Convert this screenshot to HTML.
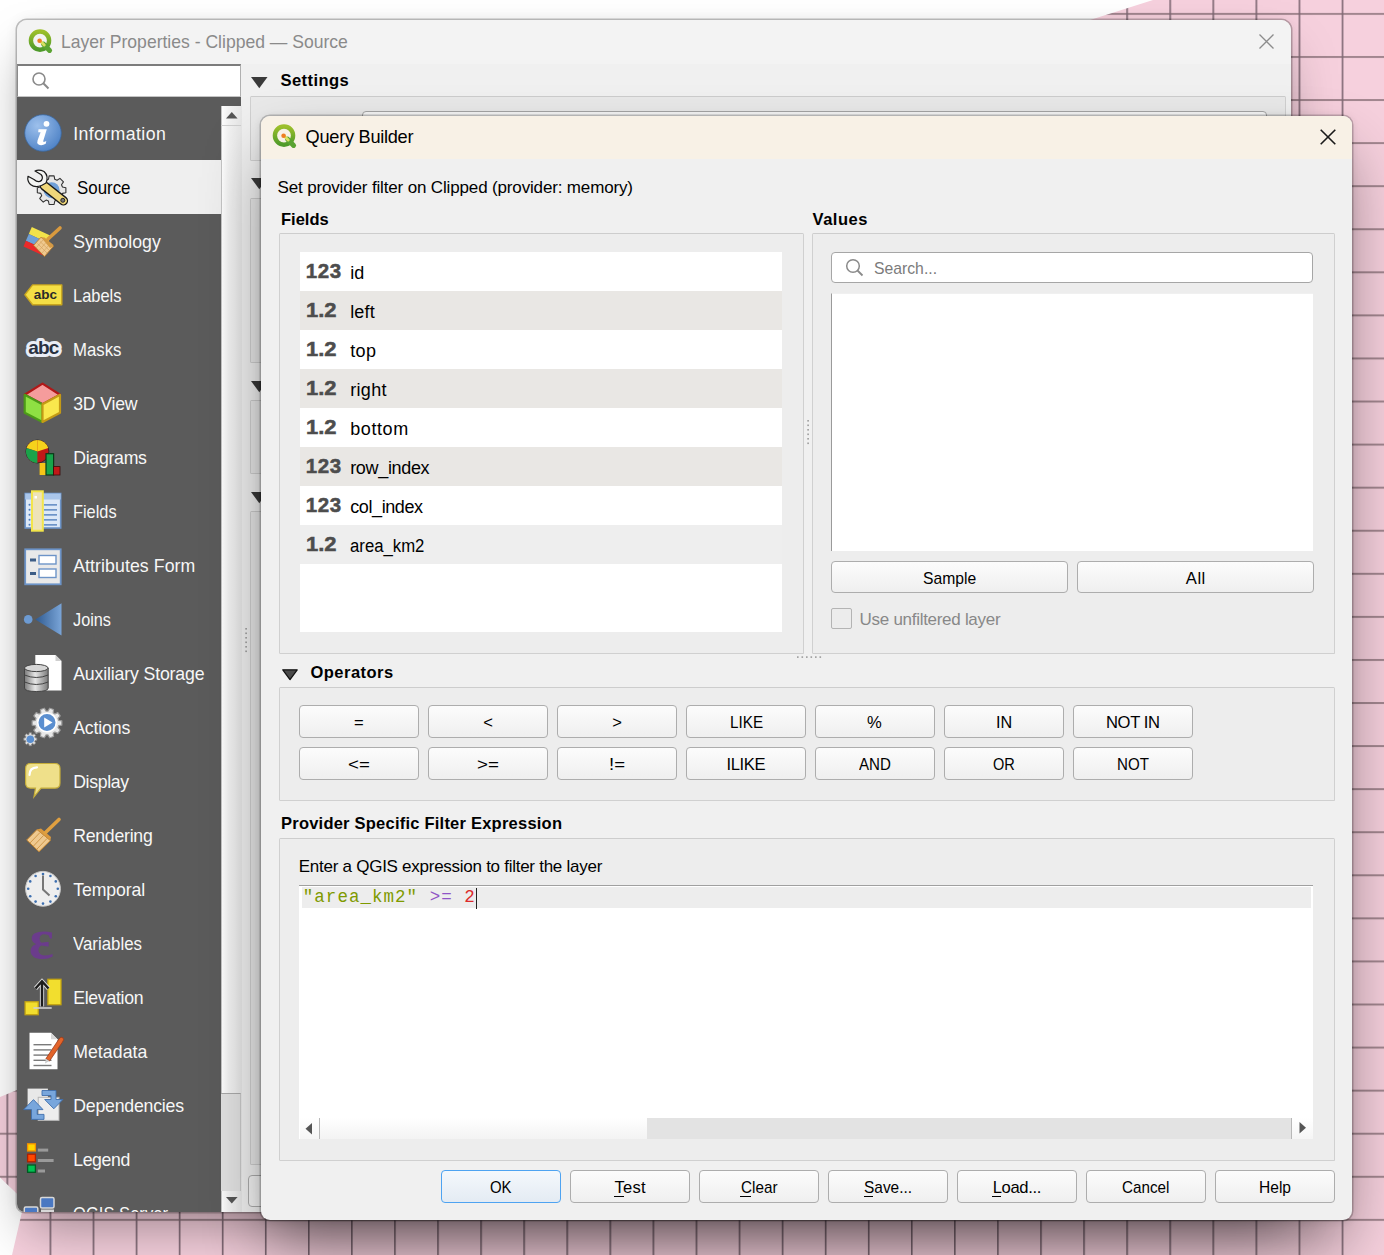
<!DOCTYPE html>
<html><head><meta charset="utf-8">
<style>
*{box-sizing:border-box;margin:0;padding:0}
html,body{width:1384px;height:1255px;overflow:hidden;background:#fff}
body{position:relative;font-family:"Liberation Sans",sans-serif;font-size:17px;color:#000}
.a{position:absolute}
.t{position:absolute;white-space:pre}
svg{position:absolute;overflow:visible}
.gb{position:absolute;background:#ededed;border:1px solid #d0d0d0;border-top:1.5px solid #cdcdcd;border-radius:1.5px}
.btn{position:absolute;height:32px;width:120px;border:1px solid #adadad;border-radius:4px;background:linear-gradient(#fcfcfc,#efefef)}
</style></head><body>
<svg width="1384" height="1255" style="left:0;top:0">
<defs>
<pattern id="grid" patternUnits="userSpaceOnUse" x="6.5" y="12.9" width="43.07" height="43.07">
<rect width="43.07" height="43.07" fill="#f6d0dd"/>
<rect x="0" y="0" width="43.07" height="2" fill="#a2868f"/>
<rect x="0" y="0" width="1.6" height="43.07" fill="#7f6874"/>
</pattern>
</defs>
<rect width="1384" height="1255" fill="url(#grid)"/>
<polygon points="0,0 1153,0 1090,20 600,600 17,1090 0,1097" fill="#ffffff"/>
<polygon points="0,1177.6 24.5,1201 12,1255 0,1255" fill="#ffffff"/>
</svg>
<div class="a" style="left:17px;top:20px;width:1274px;height:1192px;background:#f0f0f0;border-radius:10px 10px 8px 8px;box-shadow:0 0 0 1.5px rgba(0,0,0,.24),0 0 14px rgba(0,0,0,.07),0 26px 50px -10px rgba(0,0,0,.36)"></div>
<div class="a" style="left:17px;top:20px;width:1274px;height:44px;background:#f3f3f3;border-radius:10px 10px 0 0"></div>
<div class="a" style="left:241px;top:64px;width:1050px;height:1148px;background:#f0f0f0;border-radius:0 0 8px 0"></div>
<svg style="left:28px;top:29px" width="24" height="24" viewBox="0 0 24 24">
<defs><linearGradient id="qg28" x1="0" y1="0" x2="0" y2="1"><stop offset="0" stop-color="#9cbf2b"/><stop offset="1" stop-color="#4f9a2a"/></linearGradient></defs>
<circle cx="12" cy="11.6" r="9.1" fill="none" stroke="url(#qg28)" stroke-width="4.4"/>
<path d="M15.6 15.2 L21.6 21.4" stroke="#5aa332" stroke-width="5" stroke-linecap="round"/>
<path d="M13.2 13 L16.2 16" stroke="#d8e060" stroke-width="3" stroke-linecap="round"/>
<circle cx="11.6" cy="11.8" r="2.3" fill="#ef7f22"/>
</svg>
<span class="t" style="left:60.5px;top:32.9px;font-size:18.6px;line-height:18.6px;color:#8a8a8a;transform:scaleX(0.9442);transform-origin:0 0;">Layer Properties - Clipped — Source</span>
<svg style="left:1259px;top:34px" width="15" height="15"><path d="M0.5 0.5 L14.5 14.5 M14.5 0.5 L0.5 14.5" stroke="#8c8c8c" stroke-width="1.3"/></svg>
<div class="a" style="left:17px;top:64px;width:224px;height:33px;background:#fff;border:1px solid #b0b0b0;border-top:2px solid #7c7c7c;border-left:1.5px solid #8a8a8a;border-bottom:1px solid #c4c4c4"></div>
<svg style="left:31px;top:71px" width="20" height="20"><circle cx="8" cy="8" r="6" fill="none" stroke="#8a8a8a" stroke-width="1.6"/><path d="M12.3 12.3 L17.5 17.5" stroke="#8a8a8a" stroke-width="2"/></svg>
<div class="a" style="left:17px;top:97px;width:224px;height:1115px;background:#5b5b5b;border-bottom-left-radius:8px"></div>
<div class="a" style="left:17px;top:160px;width:204px;height:54px;background:#efefef"></div>
<div class="a" style="left:221px;top:106px;width:20.5px;height:1106px;background:linear-gradient(90deg,#ffffff,#f2f2f2 35%,#e6e6e6)"></div>
<div class="a" style="left:221px;top:106px;width:1px;height:1106px;background:#c4c4c4"></div>
<div class="a" style="left:221px;top:125px;width:20px;height:1px;background:#cfcfcf"></div>
<svg style="left:226px;top:112px" width="12" height="7"><path d="M0 6.5 L5.8 0 L11.6 6.5 Z" fill="#555"/></svg>
<div class="a" style="left:221px;top:1093px;width:20px;height:98px;background:#e0e0e0;border-top:1.5px solid #a8a8a8;border-right:1px solid #c8c8c8"></div>
<svg style="left:226px;top:1197px" width="12" height="7"><path d="M0 0 L5.8 6.5 L11.6 0 Z" fill="#555"/></svg>
<svg style="left:251px;top:77px" width="17" height="12"><path d="M0 0 L16.5 0 L8.25 11.3 Z" fill="#3a3a3a"/></svg>
<span class="t" style="left:280.5px;top:73.0px;font-size:16.6px;line-height:16.6px;color:#000;font-weight:bold;letter-spacing:0.402px;">Settings</span>
<div class="gb" style="left:250px;top:96px;width:1036px;height:65px;background:#e9e9e9"></div>
<div class="a" style="left:362px;top:111px;width:905px;height:30px;border:1px solid #a6a6a6;border-radius:4px;background:#f8f8f8"></div>
<svg style="left:251px;top:178px" width="17" height="12"><path d="M0 0 L16.5 0 L8.25 11.3 Z" fill="#3a3a3a"/></svg>
<div class="gb" style="left:250px;top:198px;width:1036px;height:165px;background:#e9e9e9"></div>
<svg style="left:251px;top:381px" width="17" height="12"><path d="M0 0 L16.5 0 L8.25 11.3 Z" fill="#3a3a3a"/></svg>
<div class="gb" style="left:250px;top:400px;width:1036px;height:74px;background:#e9e9e9"></div>
<svg style="left:251px;top:492px" width="17" height="12"><path d="M0 0 L16.5 0 L8.25 11.3 Z" fill="#3a3a3a"/></svg>
<div class="gb" style="left:250px;top:511px;width:1036px;height:654px;background:#e9e9e9"></div>
<div class="a" style="left:248px;top:1175px;width:120px;height:32px;border:1px solid #adadad;border-radius:4px;background:#f4f4f4"></div>
<svg style="left:245px;top:628px" width="3" height="26"><rect x="0.3" y="0.0" width="1.6" height="1.6" fill="#9c9c9c"/><rect x="0.3" y="4.5" width="1.6" height="1.6" fill="#9c9c9c"/><rect x="0.3" y="9.0" width="1.6" height="1.6" fill="#9c9c9c"/><rect x="0.3" y="13.5" width="1.6" height="1.6" fill="#9c9c9c"/><rect x="0.3" y="18.0" width="1.6" height="1.6" fill="#9c9c9c"/><rect x="0.3" y="22.5" width="1.6" height="1.6" fill="#9c9c9c"/></svg>
<div class="a" style="left:17px;top:97px;width:204px;height:1115px;overflow:hidden;border-bottom-left-radius:8px">
<svg style="left:7px;top:17px" width="40" height="40"><defs><radialGradient id="ig0" cx=".35" cy=".3" r=".8"><stop offset="0" stop-color="#9dc0ec"/><stop offset="1" stop-color="#4a7fc4"/></radialGradient></defs>
<circle cx="19" cy="19" r="18.3" fill="url(#ig0)" stroke="#3a679f" stroke-width="0.8"/>
<circle cx="22.5" cy="9.8" r="2.9" fill="#fff"/><path d="M14.5 15.2 L22.8 15.2 L19.3 26.8 Q18.8 28.6 21.2 27.6 L22.3 27.1 L21.7 29.8 Q17.2 32.4 14.2 30.2 Q12.6 29 13.6 26.2 L16.6 18.3 L14.2 18.3 Z" fill="#fff"/></svg>
<span class="t" style="left:56.2px;top:28.7px;font-size:17.7px;line-height:17.7px;color:#f7f7f7;letter-spacing:0.405px;">Information</span>
<svg style="left:7px;top:71px" width="40" height="40"><polygon points="38.45,19.05 41.88,19.71 41.88,24.69 38.45,25.35 37.50,27.64 39.46,30.54 35.94,34.06 33.04,32.10 30.75,33.05 30.09,36.48 25.11,36.48 24.45,33.05 22.16,32.10 19.26,34.06 15.74,30.54 17.70,27.64 16.75,25.35 13.32,24.69 13.32,19.71 16.75,19.05 17.70,16.76 15.74,13.86 19.26,10.34 22.16,12.30 24.45,11.35 25.11,7.92 30.09,7.92 30.75,11.35 33.04,12.30 35.94,10.34 39.46,13.86 37.50,16.76" fill="#e6e6e6" stroke="#333" stroke-width="1.1" stroke-linejoin="round"/><circle cx="27.6" cy="22.2" r="8" fill="#6fa0d8"/>
<path d="M20.5 17.9 L39.4 32.8" stroke="#1a1a1a" stroke-width="9.5" stroke-linecap="round"/><path d="M20.5 17.9 L39.4 32.8" stroke="#efd77a" stroke-width="6.8" stroke-linecap="round"/><circle cx="38.8" cy="32.3" r="2" fill="#777" stroke="#222" stroke-width="1"/>
<path d="M17.5 17.5 L22 15 Q25 8 20 3.5 Q15 1 11 3 L17 6.5 Q19.5 9 17.5 12.5 Q14 15 10 11.5 L4 8.3 Q3 13 6.5 16.5 Q11 20 17.5 17.5 Z" fill="#f4f5f3" stroke="#1a1a1a" stroke-width="1.2" stroke-linejoin="round"/></svg>
<span class="t" style="left:60.0px;top:82.8px;font-size:17.7px;line-height:17.7px;color:#000;transform:scaleX(0.9539);transform-origin:0 0;">Source</span>
<svg style="left:7px;top:125px" width="40" height="40"><polygon points="7.8,5.1 26.2,13.5 24.2,20.9 4.8,12" fill="#f2e24a"/><polygon points="4.8,12 24.2,20.9 22.2,28 1.9,18.7" fill="#6fa0d8"/><polygon points="1.9,18.7 22.2,28 20.5,34.1 -0.5,24.4" fill="#ea2a2a"/>
<polygon points="9.6,23.3 17,15.2 29.3,24.4 20.5,34.5" fill="#efc98f" stroke="#b87a2a" stroke-width="0.9"/><path d="M12 26 L19 18 M15 28.5 L22 20.5 M18 31 L25 23 M13.5 21.5 L23 31 M16 19.5 L25.5 28.5" stroke="#c99550" stroke-width=".6" opacity=".8"/><polygon points="17,15.2 20.5,15.5 29.5,23 29.3,24.4 26,26" fill="#d49a45"/>
<path d="M24 17 L36 6" stroke="#d99a3e" stroke-width="3.6" stroke-linecap="round"/></svg>
<span class="t" style="left:56.2px;top:136.8px;font-size:17.7px;line-height:17.7px;color:#f7f7f7;letter-spacing:0.017px;">Symbology</span>
<svg style="left:7px;top:179px" width="40" height="40"><path d="M0.9 18.8 L8.6 8.9 L37.8 8.9 L37.8 28.7 L8.6 28.7 Z" fill="#f5df45" stroke="#c9a61e" stroke-width="1.4" stroke-linejoin="round"/><text x="21.3" y="23.2" font-family="Liberation Sans" font-weight="bold" font-size="13.5" text-anchor="middle" fill="#2a2a2a">abc</text></svg>
<span class="t" style="left:56.2px;top:190.8px;font-size:17.7px;line-height:17.7px;color:#f7f7f7;transform:scaleX(0.9298);transform-origin:0 0;">Labels</span>
<svg style="left:7px;top:233px" width="40" height="40"><text x="19.3" y="24.4" font-family="Liberation Sans" font-weight="bold" font-size="19" text-anchor="middle" fill="#283040" stroke="#e9edf6" stroke-width="6" stroke-linejoin="round" paint-order="stroke" letter-spacing="-0.8">abc</text></svg>
<span class="t" style="left:56.2px;top:244.8px;font-size:17.7px;line-height:17.7px;color:#f7f7f7;transform:scaleX(0.9484);transform-origin:0 0;">Masks</span>
<svg style="left:7px;top:287px" width="40" height="40"><path d="M18.5 -0.4 L36 10.8 L18.5 20.2 L0.7 10.8 Z" fill="#f59c9c" stroke="#b01818" stroke-width="2.2" stroke-linejoin="round"/><path d="M0.7 10.8 L18.5 20.2 L18.5 38 L0.7 28.8 Z" fill="#8fe043" stroke="#4c9a18" stroke-width="2.2" stroke-linejoin="round"/><path d="M36 10.8 L18.5 20.2 L18.5 38 L36 28.8 Z" fill="#f9e84d" stroke="#c49a16" stroke-width="2.2" stroke-linejoin="round"/></svg>
<span class="t" style="left:56.2px;top:298.8px;font-size:17.7px;line-height:17.7px;color:#f7f7f7;letter-spacing:-0.182px;">3D View</span>
<svg style="left:7px;top:341px" width="40" height="40"><circle cx="13.4" cy="13.5" r="11.5" fill="#c01818" stroke="#222" stroke-width=".8"/><path d="M13.4 13.5 L13.4 2 A11.5 11.5 0 0 0 2.5 10 Z" fill="#f6d21c"/><path d="M13.4 13.5 L13.4 2 A11.5 11.5 0 0 1 24.3 10 Z" fill="#f6d21c"/><path d="M13.4 13.5 L2.5 10 A11.5 11.5 0 0 0 13.4 25 Z" fill="#1aa34a"/>
<rect x="15.6" y="25" width="6.4" height="12" fill="#f5c518"/><rect x="22" y="15.7" width="7.6" height="21.3" fill="#18a34a" stroke="#0b3a18" stroke-width="1.2"/><rect x="29.6" y="28.6" width="6.4" height="8.4" fill="#c01818" stroke="#3a0a0a" stroke-width=".8"/></svg>
<span class="t" style="left:56.2px;top:352.8px;font-size:17.7px;line-height:17.7px;color:#f7f7f7;letter-spacing:-0.277px;">Diagrams</span>
<svg style="left:7px;top:395px" width="40" height="40"><rect x="1.2" y="1.5" width="35.5" height="34.5" fill="#dce8f7" stroke="#6d94c8" stroke-width="1.6"/><rect x="1.2" y="1.5" width="35.5" height="6" fill="#aac6ea"/><rect x="20" y="12" width="13" height="1.7" fill="#6d94c8"/><circle cx="5.5" cy="12.8" r="1" fill="#4a7cc0"/><rect x="20" y="17" width="13" height="1.7" fill="#6d94c8"/><circle cx="5.5" cy="17.8" r="1" fill="#4a7cc0"/><rect x="20" y="22" width="13" height="1.7" fill="#6d94c8"/><circle cx="5.5" cy="22.8" r="1" fill="#4a7cc0"/><rect x="20" y="27" width="13" height="1.7" fill="#6d94c8"/><circle cx="5.5" cy="27.8" r="1" fill="#4a7cc0"/><rect x="20" y="32" width="13" height="1.7" fill="#6d94c8"/><circle cx="5.5" cy="32.8" r="1" fill="#4a7cc0"/><rect x="8" y="-0.7" width="10.8" height="39.4" fill="#eee3b8" stroke="#f3e54a" stroke-width="2"/><rect x="10.5" y="4" width="2.5" height="2.5" fill="#fff"/></svg>
<span class="t" style="left:56.2px;top:406.8px;font-size:17.7px;line-height:17.7px;color:#f7f7f7;transform:scaleX(0.9234);transform-origin:0 0;">Fields</span>
<svg style="left:7px;top:449px" width="40" height="40"><rect x="1.2" y="3.3" width="35.5" height="35" fill="#e9e9e9" stroke="#6d94c8" stroke-width="1.8"/><rect x="6" y="12.5" width="6" height="3" fill="#3d5d86"/><rect x="6" y="26" width="6" height="3" fill="#3d5d86"/><rect x="15" y="9.5" width="17" height="8.5" fill="#fff" stroke="#6d94c8" stroke-width="1.4"/><rect x="15" y="23" width="17" height="8.5" fill="#fff" stroke="#6d94c8" stroke-width="1.4"/></svg>
<span class="t" style="left:56.2px;top:460.8px;font-size:17.7px;line-height:17.7px;color:#f7f7f7;letter-spacing:0.087px;">Attributes Form</span>
<svg style="left:7px;top:503px" width="40" height="40"><defs><linearGradient id="ig9" x1="0" x2="1"><stop offset="0" stop-color="#2f5a90"/><stop offset="1" stop-color="#7aa5d8"/></linearGradient></defs><circle cx="4.2" cy="19.4" r="4.3" fill="#6d9bd3"/><path d="M11.3 19.4 L37.5 3.2 L37.5 35.5 Z" fill="url(#ig9)"/></svg>
<span class="t" style="left:56.2px;top:514.8px;font-size:17.7px;line-height:17.7px;color:#f7f7f7;transform:scaleX(0.9196);transform-origin:0 0;">Joins</span>
<svg style="left:7px;top:557px" width="40" height="40"><path d="M11.3 0.9 L31.5 0.9 L37.5 6.9 L37.5 36.4 L11.3 36.4 Z" fill="#fff"/><path d="M31.5 0.9 L31.5 6.9 L37.5 6.9 Z" fill="#cfcfcf"/>
<defs><linearGradient id="ig10" x1="0" x2="1"><stop offset="0" stop-color="#7a7a7a"/><stop offset=".45" stop-color="#e6e6e6"/><stop offset="1" stop-color="#7a7a7a"/></linearGradient></defs>
<path d="M0.5 14 L0.5 34 Q0.5 37.5 12.3 37.5 Q24.2 37.5 24.2 34 L24.2 14 Z" fill="url(#ig10)" stroke="#444" stroke-width="1"/><ellipse cx="12.3" cy="14" rx="11.8" ry="3.6" fill="#d6d6d6" stroke="#444" stroke-width="1"/><path d="M0.5 21 Q12.3 26 24.2 21 M0.5 28 Q12.3 33 24.2 28" fill="none" stroke="#444" stroke-width="1"/></svg>
<span class="t" style="left:56.2px;top:568.8px;font-size:17.7px;line-height:17.7px;color:#f7f7f7;letter-spacing:-0.144px;">Auxiliary Storage</span>
<svg style="left:7px;top:611px" width="40" height="40"><polygon points="34.69,12.31 37.86,12.93 37.86,17.07 34.69,17.69 34.04,19.70 36.23,22.06 33.80,25.40 30.88,24.05 29.17,25.29 29.56,28.49 25.63,29.77 24.05,26.95 21.95,26.95 20.37,29.77 16.44,28.49 16.83,25.29 15.12,24.05 12.20,25.40 9.77,22.06 11.96,19.70 11.31,17.69 8.14,17.07 8.14,12.93 11.31,12.31 11.96,10.30 9.77,7.94 12.20,4.60 15.12,5.95 16.83,4.71 16.44,1.51 20.37,0.23 21.95,3.05 24.05,3.05 25.63,0.23 29.56,1.51 29.17,4.71 30.88,5.95 33.80,4.60 36.23,7.94 34.04,10.30" fill="#e8e8e8" stroke="#9a9a9a" stroke-width="1.2" stroke-linejoin="round"/><circle cx="23" cy="14.5" r="9.3" fill="#5b8fd0" stroke="#fff" stroke-width="1.6"/><path d="M20.2 9.5 L28.5 14.5 L20.2 19.5 Z" fill="#fff"/><polygon points="11.10,29.81 12.80,30.07 12.80,32.33 11.10,32.59 10.68,33.61 11.70,35.00 10.10,36.60 8.71,35.58 7.69,36.00 7.43,37.70 5.17,37.70 4.91,36.00 3.89,35.58 2.50,36.60 0.90,35.00 1.92,33.61 1.50,32.59 -0.20,32.33 -0.20,30.07 1.50,29.81 1.92,28.79 0.90,27.40 2.50,25.80 3.89,26.82 4.91,26.40 5.17,24.70 7.43,24.70 7.69,26.40 8.71,26.82 10.10,25.80 11.70,27.40 10.68,28.79" fill="#e0e0e0" stroke="#8a8a8a" stroke-width="0.8" stroke-linejoin="round"/><circle cx="6.3" cy="31.2" r="3.8" fill="#5b8fd0"/></svg>
<span class="t" style="left:56.2px;top:622.8px;font-size:17.7px;line-height:17.7px;color:#f7f7f7;letter-spacing:-0.141px;">Actions</span>
<svg style="left:7px;top:665px" width="40" height="40"><path d="M6.5 1.5 L31 1.5 Q36 1.5 36 6.5 L36 21 Q36 26.2 31 26.2 L17 26.2 L10 34.8 L11.5 26.2 L6.5 26.2 Q1.6 26.2 1.6 21 L1.6 6.5 Q1.6 1.5 6.5 1.5 Z" fill="#efe08a" stroke="#c6ae3a" stroke-width="1.2"/><path d="M5.5 13 Q5.5 5.5 13 5.3" fill="none" stroke="#fff" stroke-width="2.2" stroke-linecap="round"/></svg>
<span class="t" style="left:56.2px;top:676.8px;font-size:17.7px;line-height:17.7px;color:#f7f7f7;letter-spacing:-0.339px;">Display</span>
<svg style="left:7px;top:719px" width="40" height="40"><polygon points="2.7,24 13,13.5 26.4,24.5 15,35.7" fill="#efc98f" stroke="#c0832e" stroke-width="1"/><polygon points="13,13.5 17,12.5 27,21 26.4,24.5" fill="#d9983e"/><path d="M6 27 L16 16.5 M9.5 30 L19.5 19.5 M13 33 L23 22.5" stroke="#c0832e" stroke-width=".7"/><path d="M21 17 L35 3.5" stroke="#e0a040" stroke-width="3.6" stroke-linecap="round"/></svg>
<span class="t" style="left:56.2px;top:730.8px;font-size:17.7px;line-height:17.7px;color:#f7f7f7;letter-spacing:-0.259px;">Rendering</span>
<svg style="left:7px;top:773px" width="40" height="40"><circle cx="19" cy="18.8" r="17.4" fill="#eeeeee" stroke="#c8c8c8" stroke-width="1"/><circle cx="33.8" cy="18.8" r="1.3" fill="#3d6fb0"/><circle cx="31.8" cy="26.2" r="1.3" fill="#3d6fb0"/><circle cx="26.4" cy="31.6" r="1.3" fill="#3d6fb0"/><circle cx="19.0" cy="33.6" r="1.3" fill="#3d6fb0"/><circle cx="11.6" cy="31.6" r="1.3" fill="#3d6fb0"/><circle cx="6.2" cy="26.2" r="1.3" fill="#3d6fb0"/><circle cx="4.2" cy="18.8" r="1.3" fill="#3d6fb0"/><circle cx="6.2" cy="11.4" r="1.3" fill="#3d6fb0"/><circle cx="11.6" cy="6.0" r="1.3" fill="#3d6fb0"/><circle cx="19.0" cy="4.0" r="1.3" fill="#3d6fb0"/><circle cx="26.4" cy="6.0" r="1.3" fill="#3d6fb0"/><circle cx="31.8" cy="11.4" r="1.3" fill="#3d6fb0"/><path d="M19 5.5 L19 19.5 L25.5 25.5" fill="none" stroke="#777" stroke-width="2"/></svg>
<span class="t" style="left:56.2px;top:784.8px;font-size:17.7px;line-height:17.7px;color:#f7f7f7;letter-spacing:-0.114px;">Temporal</span>
<svg style="left:7px;top:827px" width="40" height="40"><text x="5" y="33.5" font-family="Liberation Serif" font-weight="bold" font-size="58" fill="#6b3c8c">ε</text></svg>
<span class="t" style="left:56.2px;top:838.8px;font-size:17.7px;line-height:17.7px;color:#f7f7f7;transform:scaleX(0.9520);transform-origin:0 0;">Variables</span>
<svg style="left:7px;top:881px" width="40" height="40"><rect x="23.9" y="1.3" width="13.1" height="25.4" fill="#f2de2e" stroke="#c4a412" stroke-width="1.3"/><rect x="1.1" y="23.8" width="13.1" height="12.9" fill="#f2de2e" stroke="#c4a412" stroke-width="1.3"/><path d="M9.4 30 L27.7 30" stroke="#d0d0d0" stroke-width="1.6"/><path d="M18 28.5 L18 4 M11.5 10.5 L18 3.3 L24.5 10.5" fill="none" stroke="#ddd" stroke-width="4.2"/><path d="M18 28.5 L18 4 M11.5 10.5 L18 3.3 L24.5 10.5" fill="none" stroke="#1c1c1c" stroke-width="2.4"/></svg>
<span class="t" style="left:56.2px;top:892.8px;font-size:17.7px;line-height:17.7px;color:#f7f7f7;letter-spacing:-0.302px;">Elevation</span>
<svg style="left:7px;top:935px" width="40" height="40"><path d="M5.5 0.7 L27 0.7 L33.5 7.2 L33.5 37.3 L5.5 37.3 Z" fill="#fff"/><path d="M27 0.7 L27 7.2 L33.5 7.2 Z" fill="#d8d8d8"/><rect x="9.5" y="12.0" width="18" height="1.4" fill="#7a7a7a"/><rect x="9.5" y="17.2" width="18" height="1.4" fill="#7a7a7a"/><rect x="9.5" y="22.4" width="18" height="1.4" fill="#7a7a7a"/><rect x="9.5" y="27.6" width="18" height="1.4" fill="#7a7a7a"/><rect x="9.5" y="32.8" width="18" height="1.4" fill="#7a7a7a"/><path d="M21.9 26.7 L35 7 Q37 4 39 5.8 Q40.5 7.5 38.5 10 L25.5 29 Z" fill="#e3642a" stroke="#9b3a18" stroke-width=".8"/><path d="M21.9 26.7 L25.5 29 L21 31.5 Z" fill="#ccc"/></svg>
<span class="t" style="left:56.2px;top:946.7px;font-size:17.7px;line-height:17.7px;color:#f7f7f7;letter-spacing:0.057px;">Metadata</span>
<svg style="left:7px;top:989px" width="40" height="40"><rect x="3.6" y="2.6" width="20.3" height="20.2" fill="#e8e8e8"/><rect x="14.2" y="11.3" width="20.8" height="23.1" fill="#ededed" stroke="#b5b5b5" stroke-width="1"/><path d="M18 4.5 L32 4.5 L32 13.5 L38.9 13.5 L29.8 22.8 L20.7 13.5 L27 13.5 L27 9.5 L18 9.5 Z" fill="#78a6dc" stroke="#3f6fae" stroke-width=".9"/><path d="M-0.3 23.6 L9.5 13.6 L19 23.6 L13.2 23.6 L13.2 28.4 L20 28.4 L20 33.4 L7.5 33.4 L7.5 23.6 Z" fill="#78a6dc" stroke="#3f6fae" stroke-width=".9"/></svg>
<span class="t" style="left:56.2px;top:1000.7px;font-size:17.7px;line-height:17.7px;color:#f7f7f7;letter-spacing:-0.206px;">Dependencies</span>
<svg style="left:7px;top:1043px" width="40" height="40"><rect x="3.6" y="3.8" width="7.8" height="7.2" fill="#ffd500" stroke="#f29000" stroke-width="1.3"/><rect x="3.6" y="14.2" width="7.8" height="7.6" fill="#ff4800" stroke="#b01e00" stroke-width="1.3"/><rect x="3.6" y="25" width="7.8" height="7.3" fill="#00c152" stroke="#005a22" stroke-width="1.3"/><rect x="13.8" y="8.6" width="10.4" height="3" fill="#9a9a9a"/><rect x="13.8" y="19" width="15.8" height="3" fill="#9a9a9a"/><rect x="13.8" y="29.5" width="7.2" height="3" fill="#9a9a9a"/></svg>
<span class="t" style="left:56.2px;top:1054.8px;font-size:17.7px;line-height:17.7px;color:#f7f7f7;letter-spacing:-0.393px;">Legend</span>
<svg style="left:7px;top:1097px" width="40" height="40"><rect x="16.5" y="3.5" width="13.5" height="10.5" rx="1.5" fill="#4a78c2" stroke="#d8d8d8" stroke-width="1.5"/><rect x="0.3" y="13" width="13.5" height="10" rx="1.5" fill="#4a78c2" stroke="#d8d8d8" stroke-width="1.5"/><rect x="17" y="15.5" width="13" height="3" fill="#d8d8d8"/></svg>
<span class="t" style="left:56.2px;top:1108.8px;font-size:17.7px;line-height:17.7px;color:#f7f7f7;transform:scaleX(0.9377);transform-origin:0 0;">QGIS Server</span>
</div>
<div class="a" style="left:261px;top:116px;width:1091px;height:1104px;background:#f0f0f0;border-radius:9px;box-shadow:0 0 0 1.5px rgba(0,0,0,.2),0 1px 8px rgba(0,0,0,.12),0 32px 64px -8px rgba(0,0,0,.45)"></div>
<div class="a" style="left:261px;top:116px;width:1091px;height:43.3px;background:#f8f1e6;border-radius:9px 9px 0 0"></div>
<svg style="left:272px;top:124px" width="24" height="24" viewBox="0 0 24 24">
<defs><linearGradient id="qg272" x1="0" y1="0" x2="0" y2="1"><stop offset="0" stop-color="#9cbf2b"/><stop offset="1" stop-color="#4f9a2a"/></linearGradient></defs>
<circle cx="12" cy="11.6" r="9.1" fill="none" stroke="url(#qg272)" stroke-width="4.4"/>
<path d="M15.6 15.2 L21.6 21.4" stroke="#5aa332" stroke-width="5" stroke-linecap="round"/>
<path d="M13.2 13 L16.2 16" stroke="#d8e060" stroke-width="3" stroke-linecap="round"/>
<circle cx="11.6" cy="11.8" r="2.3" fill="#ef7f22"/>
</svg>
<span class="t" style="left:305.6px;top:127.5px;font-size:18.2px;line-height:18.2px;color:#000;letter-spacing:-0.273px;">Query Builder</span>
<svg style="left:1320px;top:129px" width="16" height="16"><path d="M0.7 0.7 L15.3 15.3 M15.3 0.7 L0.7 15.3" stroke="#1a1a1a" stroke-width="1.6"/></svg>
<span class="t" style="left:277.5px;top:178.6px;font-size:17px;line-height:17px;color:#000;letter-spacing:-0.152px;">Set provider filter on Clipped (provider: memory)</span>
<span class="t" style="left:281.0px;top:211.2px;font-size:16.5px;line-height:16.5px;color:#000;font-weight:bold;">Fields</span>
<span class="t" style="left:812.5px;top:211.2px;font-size:16.5px;line-height:16.5px;color:#000;font-weight:bold;letter-spacing:0.542px;">Values</span>
<div class="gb" style="left:279px;top:233px;width:524.5px;height:420.5px"></div>
<div class="gb" style="left:812px;top:233px;width:523px;height:420.5px"></div>
<div class="a" style="left:300px;top:252px;width:482px;height:380px;background:#fff"></div>
<div class="a" style="left:300px;top:252px;width:482px;height:39px;background:#fff"></div>
<span class="t" style="left:305.8px;top:260.8px;font-size:20.5px;line-height:20.5px;color:#4d4d4d;font-weight:bold;letter-spacing:0.598px;-webkit-text-stroke:0.5px #4d4d4d;">123</span>
<span class="t" style="left:350.2px;top:264.3px;font-size:18px;line-height:18px;color:#000;">id</span>
<div class="a" style="left:300px;top:291px;width:482px;height:39px;background:#e9e7e4"></div>
<span class="t" style="left:305.8px;top:299.8px;font-size:20.5px;line-height:20.5px;color:#4d4d4d;font-weight:bold;transform:scaleX(1.0738);transform-origin:0 0;-webkit-text-stroke:0.5px #4d4d4d;">1.2</span>
<span class="t" style="left:350.2px;top:303.3px;font-size:18px;line-height:18px;color:#000;letter-spacing:0.163px;">left</span>
<div class="a" style="left:300px;top:330px;width:482px;height:39px;background:#fff"></div>
<span class="t" style="left:305.8px;top:338.8px;font-size:20.5px;line-height:20.5px;color:#4d4d4d;font-weight:bold;transform:scaleX(1.0738);transform-origin:0 0;-webkit-text-stroke:0.5px #4d4d4d;">1.2</span>
<span class="t" style="left:350.2px;top:342.3px;font-size:18px;line-height:18px;color:#000;letter-spacing:0.389px;">top</span>
<div class="a" style="left:300px;top:369px;width:482px;height:39px;background:#e9e7e4"></div>
<span class="t" style="left:305.8px;top:377.8px;font-size:20.5px;line-height:20.5px;color:#4d4d4d;font-weight:bold;transform:scaleX(1.0738);transform-origin:0 0;-webkit-text-stroke:0.5px #4d4d4d;">1.2</span>
<span class="t" style="left:350.2px;top:381.3px;font-size:18px;line-height:18px;color:#000;letter-spacing:0.321px;">right</span>
<div class="a" style="left:300px;top:408px;width:482px;height:39px;background:#fff"></div>
<span class="t" style="left:305.8px;top:416.8px;font-size:20.5px;line-height:20.5px;color:#4d4d4d;font-weight:bold;transform:scaleX(1.0738);transform-origin:0 0;-webkit-text-stroke:0.5px #4d4d4d;">1.2</span>
<span class="t" style="left:350.2px;top:420.3px;font-size:18px;line-height:18px;color:#000;letter-spacing:0.594px;">bottom</span>
<div class="a" style="left:300px;top:447px;width:482px;height:39px;background:#e9e7e4"></div>
<span class="t" style="left:305.8px;top:455.8px;font-size:20.5px;line-height:20.5px;color:#4d4d4d;font-weight:bold;letter-spacing:0.598px;-webkit-text-stroke:0.5px #4d4d4d;">123</span>
<span class="t" style="left:350.2px;top:459.3px;font-size:18px;line-height:18px;color:#000;letter-spacing:-0.331px;">row_index</span>
<div class="a" style="left:300px;top:486px;width:482px;height:39px;background:#fff"></div>
<span class="t" style="left:305.8px;top:494.8px;font-size:20.5px;line-height:20.5px;color:#4d4d4d;font-weight:bold;letter-spacing:0.598px;-webkit-text-stroke:0.5px #4d4d4d;">123</span>
<span class="t" style="left:350.2px;top:498.3px;font-size:18px;line-height:18px;color:#000;letter-spacing:-0.394px;">col_index</span>
<div class="a" style="left:300px;top:525px;width:482px;height:39px;background:#eeeeee"></div>
<span class="t" style="left:305.8px;top:533.8px;font-size:20.5px;line-height:20.5px;color:#4d4d4d;font-weight:bold;transform:scaleX(1.0738);transform-origin:0 0;-webkit-text-stroke:0.5px #4d4d4d;">1.2</span>
<span class="t" style="left:350.2px;top:537.3px;font-size:18px;line-height:18px;color:#000;transform:scaleX(0.9295);transform-origin:0 0;">area_km2</span>
<div class="a" style="left:831px;top:251.5px;width:482px;height:31px;background:#fff;border:1px solid #a6a6a6;border-radius:4px"></div>
<svg style="left:845px;top:258px" width="20" height="20"><circle cx="8" cy="8" r="6.3" fill="none" stroke="#8a8a8a" stroke-width="1.5"/><path d="M12.5 12.5 L17.5 17.5" stroke="#8a8a8a" stroke-width="1.8"/></svg>
<span class="t" style="left:874.0px;top:260.2px;font-size:17px;line-height:17px;color:#7b7b7b;transform:scaleX(0.9260);transform-origin:0 0;">Search...</span>
<div class="a" style="left:831px;top:293px;width:482px;height:258px;background:#fff;border-left:1px solid #9a9a9a;border-top:1px solid #f0f0f0"></div>
<div class="btn" style="left:831px;top:561px;width:236.5px;height:32.3px;"></div><span class="t" style="left:922.6px;top:570.9px;font-size:16.6px;line-height:16.6px;color:#000;transform:scaleX(0.9452);transform-origin:0 0;">Sample</span>
<div class="btn" style="left:1077px;top:561px;width:237px;height:32.3px;"></div><span class="t" style="left:1185.8px;top:570.9px;font-size:16.6px;line-height:16.6px;color:#000;letter-spacing:0.525px;">All</span>
<div class="a" style="left:831px;top:607.5px;width:21px;height:21px;border:1px solid #b4b4b4;background:#ececec;border-radius:2px"></div>
<span class="t" style="left:859.6px;top:611.3px;font-size:17px;line-height:17px;color:#888888;letter-spacing:-0.288px;">Use unfiltered layer</span>
<svg style="left:807px;top:420px" width="3" height="26"><rect x="0.3" y="0.0" width="1.6" height="1.6" fill="#9c9c9c"/><rect x="0.3" y="4.5" width="1.6" height="1.6" fill="#9c9c9c"/><rect x="0.3" y="9.0" width="1.6" height="1.6" fill="#9c9c9c"/><rect x="0.3" y="13.5" width="1.6" height="1.6" fill="#9c9c9c"/><rect x="0.3" y="18.0" width="1.6" height="1.6" fill="#9c9c9c"/><rect x="0.3" y="22.5" width="1.6" height="1.6" fill="#9c9c9c"/></svg>
<svg style="left:797px;top:655.5px" width="26" height="3"><rect x="0.0" y="0.3" width="1.6" height="1.6" fill="#9c9c9c"/><rect x="4.5" y="0.3" width="1.6" height="1.6" fill="#9c9c9c"/><rect x="9.0" y="0.3" width="1.6" height="1.6" fill="#9c9c9c"/><rect x="13.5" y="0.3" width="1.6" height="1.6" fill="#9c9c9c"/><rect x="18.0" y="0.3" width="1.6" height="1.6" fill="#9c9c9c"/><rect x="22.5" y="0.3" width="1.6" height="1.6" fill="#9c9c9c"/></svg>
<svg style="left:282px;top:668.5px" width="17" height="12"><path d="M0.8 0.8 L15.2 0.8 L8 10.6 Z" fill="#4a4a4a" stroke="#111" stroke-width="1.3" stroke-linejoin="round"/></svg>
<span class="t" style="left:310.5px;top:663.6px;font-size:16.5px;line-height:16.5px;color:#000;font-weight:bold;letter-spacing:0.480px;">Operators</span>
<div class="gb" style="left:279px;top:687px;width:1056px;height:113.5px"></div>
<div class="btn" style="left:299px;top:705px;width:120px;height:32.5px;"></div><span class="t" style="left:354.1px;top:715.0px;font-size:16.6px;line-height:16.6px;color:#000;">=</span>
<div class="btn" style="left:428px;top:705px;width:120px;height:32.5px;"></div><span class="t" style="left:483.2px;top:715.0px;font-size:16.6px;line-height:16.6px;color:#000;">&lt;</span>
<div class="btn" style="left:557px;top:705px;width:120px;height:32.5px;"></div><span class="t" style="left:612.2px;top:715.0px;font-size:16.6px;line-height:16.6px;color:#000;">&gt;</span>
<div class="btn" style="left:686px;top:705px;width:120px;height:32.5px;"></div><span class="t" style="left:729.5px;top:715.0px;font-size:16.6px;line-height:16.6px;color:#000;transform:scaleX(0.9197);transform-origin:0 0;">LIKE</span>
<div class="btn" style="left:815px;top:705px;width:120px;height:32.5px;"></div><span class="t" style="left:866.9px;top:715.0px;font-size:16.6px;line-height:16.6px;color:#000;">%</span>
<div class="btn" style="left:944px;top:705px;width:120px;height:32.5px;"></div><span class="t" style="left:995.9px;top:715.0px;font-size:16.6px;line-height:16.6px;color:#000;transform:scaleX(0.9759);transform-origin:0 0;">IN</span>
<div class="btn" style="left:1073px;top:705px;width:120px;height:32.5px;"></div><span class="t" style="left:1106.0px;top:715.0px;font-size:16.6px;line-height:16.6px;color:#000;letter-spacing:-0.370px;">NOT IN</span>
<div class="btn" style="left:299px;top:747px;width:120px;height:32.5px;"></div><span class="t" style="left:348.1px;top:757.0px;font-size:16.6px;line-height:16.6px;color:#000;transform:scaleX(1.1244);transform-origin:0 0;">&lt;=</span>
<div class="btn" style="left:428px;top:747px;width:120px;height:32.5px;"></div><span class="t" style="left:477.1px;top:757.0px;font-size:16.6px;line-height:16.6px;color:#000;transform:scaleX(1.1295);transform-origin:0 0;">&gt;=</span>
<div class="btn" style="left:557px;top:747px;width:120px;height:32.5px;"></div><span class="t" style="left:609.0px;top:757.0px;font-size:16.6px;line-height:16.6px;color:#000;transform:scaleX(1.1184);transform-origin:0 0;">!=</span>
<div class="btn" style="left:686px;top:747px;width:120px;height:32.5px;"></div><span class="t" style="left:726.5px;top:757.0px;font-size:16.6px;line-height:16.6px;color:#000;letter-spacing:-0.375px;">ILIKE</span>
<div class="btn" style="left:815px;top:747px;width:120px;height:32.5px;"></div><span class="t" style="left:859.0px;top:757.0px;font-size:16.6px;line-height:16.6px;color:#000;transform:scaleX(0.9101);transform-origin:0 0;">AND</span>
<div class="btn" style="left:944px;top:747px;width:120px;height:32.5px;"></div><span class="t" style="left:993.1px;top:757.0px;font-size:16.6px;line-height:16.6px;color:#000;transform:scaleX(0.8755);transform-origin:0 0;">OR</span>
<div class="btn" style="left:1073px;top:747px;width:120px;height:32.5px;"></div><span class="t" style="left:1117.0px;top:757.0px;font-size:16.6px;line-height:16.6px;color:#000;transform:scaleX(0.9104);transform-origin:0 0;">NOT</span>
<span class="t" style="left:281.0px;top:815.2px;font-size:16.5px;line-height:16.5px;color:#000;font-weight:bold;letter-spacing:0.227px;">Provider Specific Filter Expression</span>
<div class="gb" style="left:279px;top:837.5px;width:1056px;height:323px"></div>
<span class="t" style="left:298.8px;top:857.6px;font-size:17px;line-height:17px;color:#000;letter-spacing:-0.265px;">Enter a QGIS expression to filter the layer</span>
<div class="a" style="left:299px;top:885px;width:1014px;height:254px;background:#fff;border-top:1.5px solid #a0a0a0"></div>
<div class="a" style="left:302px;top:886.5px;width:1009px;height:21px;background:#ededed"></div>
<div class="t" style="left:302.8px;top:887px;font-family:'Liberation Mono',monospace;font-size:17.5px;line-height:21px;letter-spacing:1.03px"><span style="color:#7f9a00">"area_km2"</span> <span style="color:#9055c6">&gt;=</span> <span style="color:#dc2a2a">2</span></div>
<div class="a" style="left:476px;top:887.5px;width:1.2px;height:21px;background:#222"></div>
<div class="a" style="left:299.5px;top:1118px;width:1013.5px;height:21px;background:#e3e3e3"></div>
<div class="a" style="left:299.5px;top:1118px;width:20px;height:21px;background:linear-gradient(#fff,#f5f5f5);border-right:1px solid #b8b8b8"></div>
<div class="a" style="left:320px;top:1118px;width:326.5px;height:21px;background:linear-gradient(#ffffff,#f3f3f3)"></div>
<div class="a" style="left:1291px;top:1118px;width:22px;height:21px;background:linear-gradient(#fff,#f5f5f5);border-left:1px solid #b8b8b8"></div>
<svg style="left:305px;top:1122.5px" width="8" height="12"><path d="M7 0 L0.5 5.8 L7 11.5 Z" fill="#555"/></svg>
<svg style="left:1298.8px;top:1122.3px" width="8" height="12"><path d="M0.5 0 L7 5.8 L0.5 11.5 Z" fill="#555"/></svg>
<div class="btn" style="left:441px;top:1170px;width:120px;height:32.5px;border-color:#4ea3f1;background:linear-gradient(#f4f8fc,#e4ebf3);"></div><span class="t" style="left:490.2px;top:1180.0px;font-size:16.6px;line-height:16.6px;color:#000;transform:scaleX(0.9006);transform-origin:0 0;">OK</span>
<div class="btn" style="left:570px;top:1170px;width:120px;height:32.5px;"></div><span class="t" style="left:614.5px;top:1180.0px;font-size:16.6px;line-height:16.6px;color:#000;letter-spacing:0.185px;">Test</span><div class="a" style="left:614.0px;top:1195.8px;width:10px;height:1.2px;background:#000"></div>
<div class="btn" style="left:699px;top:1170px;width:120px;height:32.5px;"></div><span class="t" style="left:740.8px;top:1180.0px;font-size:16.6px;line-height:16.6px;color:#000;transform:scaleX(0.9201);transform-origin:0 0;">Clear</span><div class="a" style="left:740.2px;top:1195.8px;width:10.5px;height:1.2px;background:#000"></div>
<div class="btn" style="left:828px;top:1170px;width:120px;height:32.5px;"></div><span class="t" style="left:864.0px;top:1180.0px;font-size:16.6px;line-height:16.6px;color:#000;transform:scaleX(0.9309);transform-origin:0 0;">Save...</span><div class="a" style="left:863.5px;top:1195.8px;width:9.5px;height:1.2px;background:#000"></div>
<div class="btn" style="left:957px;top:1170px;width:120px;height:32.5px;"></div><span class="t" style="left:992.7px;top:1180.0px;font-size:16.6px;line-height:16.6px;color:#000;letter-spacing:-0.361px;">Load...</span><div class="a" style="left:992.2px;top:1195.8px;width:8.5px;height:1.2px;background:#000"></div>
<div class="btn" style="left:1086px;top:1170px;width:120px;height:32.5px;"></div><span class="t" style="left:1122.3px;top:1180.0px;font-size:16.6px;line-height:16.6px;color:#000;transform:scaleX(0.9173);transform-origin:0 0;">Cancel</span>
<div class="btn" style="left:1215px;top:1170px;width:120px;height:32.5px;"></div><span class="t" style="left:1259.0px;top:1180.0px;font-size:16.6px;line-height:16.6px;color:#000;transform:scaleX(0.9373);transform-origin:0 0;">Help</span>
</body></html>
